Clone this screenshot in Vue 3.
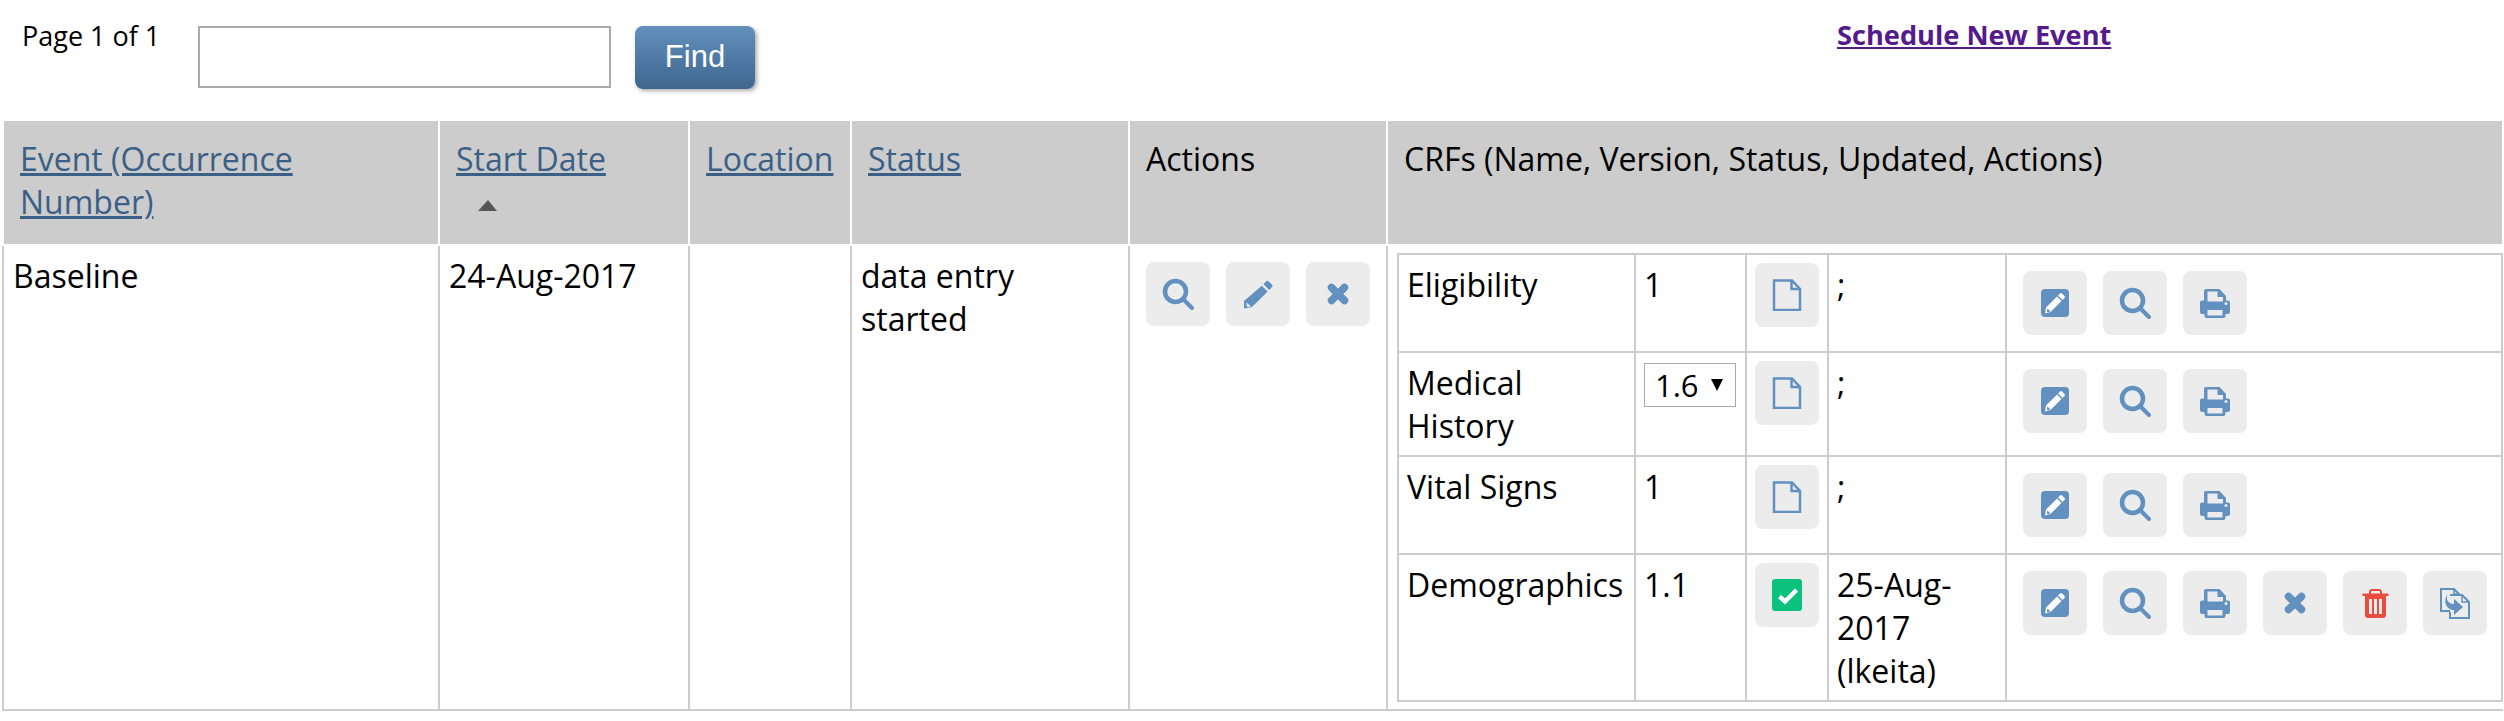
<template>
  <div class="page">
    <div class="toolbar">
      <span class="pager">Page 1 of 1</span>
      <input class="search" type="text" />
      <button class="find">Find</button>
      <a class="schedule" href="#">Schedule New Event</a>
    </div>

    <table class="events">
      <colgroup>
        <col style="width: 436px" />
        <col style="width: 250px" />
        <col style="width: 162px" />
        <col style="width: 278px" />
        <col style="width: 258px" />
        <col />
      </colgroup>
      <thead>
        <tr>
          <th><a href="#">Event (Occurrence Number)</a></th>
          <th>
            <a href="#">Start Date</a>
            <div class="sort"></div>
          </th>
          <th><a href="#">Location</a></th>
          <th><a href="#">Status</a></th>
          <th>Actions</th>
          <th>CRFs (Name, Version, Status, Updated, Actions)</th>
        </tr>
      </thead>
      <tbody>
        <tr>
          <td class="main-cell">Baseline</td>
          <td class="main-cell">24-Aug-2017</td>
          <td class="main-cell"></td>
          <td class="main-cell">data entry started</td>
          <td class="main-cell action-cell">
            <div class="btns">
              <span class="btn" v-for="i in eventIcons" :key="i"><svg viewBox="0 0 32 32"><use :href="'#' + i" /></svg></span>
            </div>
          </td>
          <td class="crf-cell">
            <table class="crfs">
              <colgroup>
                <col style="width: 237px" />
                <col style="width: 111px" />
                <col style="width: 82px" />
                <col style="width: 178px" />
                <col />
              </colgroup>
              <tr v-for="crf in crfs" :key="crf.name" :style="{ height: crf.height + 'px' }">
                <td>{{ crf.name }}</td>
                <td>
                  <span v-if="crf.versions" class="version-wrap">
                    <select class="version"><option v-for="v in crf.versions" :key="v">{{ v }}</option></select>
                  </span>
                  <template v-else>{{ crf.version }}</template>
                </td>
                <td class="status-cell">
                  <span class="btn">
                    <svg viewBox="0 0 32 32"><use :href="crf.done ? '#i-done' : '#i-doc'" /></svg>
                  </span>
                </td>
                <td>{{ crf.updated }}</td>
                <td class="crf-actions">
                  <div class="btns">
                    <span class="btn" v-for="i in crf.actions" :key="i"><svg viewBox="0 0 32 32"><use :href="'#' + i" /></svg></span>
                  </div>
                </td>
              </tr>
            </table>
          </td>
        </tr>
      </tbody>
    </table>

    <svg class="defs" width="0" height="0">
      <defs>
        <g id="i-search">
          <circle cx="13.500" cy="13.500" r="10.500" fill="none" stroke="#6290bf" stroke-width="4.500" />
          <path d="M22 22l8 8" stroke="#6290bf" stroke-width="4" stroke-linecap="round" />
        </g>
        <path id="i-pencil" fill="#6290bf" d="M24 3.500a2 2 0 0 1 2.800 0l3 3a2 2 0 0 1 0 2.800l-2.600 2.600-5.800-5.800zM19.800 7.700l5.800 5.800L10 29l-8 1.500V23zM4.500 24.500v3.300l1.500 1.200 3-.8z" />
        <g id="i-x">
          <path d="M9.500 9.500l13 13M22.500 9.500l-13 13" stroke="#6290bf" stroke-width="7.500" stroke-linecap="round" />
        </g>
        <g id="i-edit">
          <rect x="2" y="2" width="28" height="28" rx="4" fill="#6290bf" />
          <path fill="#fff" d="M21 6.500a1.500 1.500 0 0 1 2 0l2.500 2.500a1.500 1.500 0 0 1 0 2l-2 2-4.500-4.500zM18 9.500l4.500 4.500L11.500 25 6 26.500 7 20.500zM8.500 21.500l-.7 2.800.9.900 2.800-.8z" />
        </g>
        <path id="i-print" fill="#6290bf" fill-rule="evenodd" d="M7 2a2 2 0 0 0-2 2v9.500H3a2 2 0 0 0-2 2V25a2 2 0 0 0 2 2h2.500v2a2 2 0 0 0 2 2h17a2 2 0 0 0 2-2v-2H29a2 2 0 0 0 2-2v-9.500a2 2 0 0 0-2-2h-2V9l-6.500-7zM8.500 4.500h10V10H24v4.500H8.500zM27 15a1.500 1.500 0 1 1 0 3 1.500 1.500 0 0 1 0-3zM8.500 23h15v5.500h-15z" />
        <path id="i-trash" fill="#e94b3c" fill-rule="evenodd" d="M10 6.500V5a3 3 0 0 1 3-3h7a3 3 0 0 1 3 3v1.500h6.500V9H27v19a3 3 0 0 1-3 3H9a3 3 0 0 1-3-3V9H3.500V6.500zM12 6.500h9V5a1 1 0 0 0-1-1h-7a1 1 0 0 0-1 1zM10 12v15h3V12zM15 12v15h3V12zM20 12v15h3V12z" />
        <g id="i-copy" fill="none" stroke="#6290bf">
          <path d="M11 24H2V2h13l5 5v1" stroke-width="2" />
          <path d="M15 2v5h5" stroke-width="1.500" />
          <path d="M11 8h12l7 7v16H11v-6" stroke-width="2" />
          <path d="M23 8v7h7" stroke-width="1.500" />
          <path fill="#6290bf" stroke="none" d="M9 6C6 12 9 17 15 17v-5l9 8-9 8v-5C8 23 3 15 9 6z" />
        </g>
        <g id="i-doc" fill="none" stroke="#6290bf" stroke-width="2.500">
          <path d="M3 1.500h18l8 8.500v21H3z" />
          <path d="M20.500 1.500V10H29" />
        </g>
        <g id="i-done">
          <rect x="1" y="0" width="30" height="32" rx="3" fill="#0ac27b" />
          <path d="M8.500 17.500l5.500 5L25.500 11" fill="none" stroke="#fff" stroke-width="4.500" />
        </g>
      </defs>
    </svg>
  </div>
</template>

<script setup>
const eventIcons = ['i-search', 'i-pencil', 'i-x']
const rowActions = ['i-edit', 'i-search', 'i-print']

const crfs = [
  { name: 'Eligibility', version: '1', updated: ';', actions: rowActions, height: 97 },
  { name: 'Medical History', versions: ['1.6'], updated: ';', actions: rowActions, height: 104 },
  { name: 'Vital Signs', version: '1', updated: ';', actions: rowActions, height: 97 },
  {
    name: 'Demographics',
    version: '1.1',
    done: true,
    updated: '25-Aug-2017 (lkeita)',
    actions: [...rowActions, 'i-x', 'i-trash', 'i-copy'],
    height: 146
  }
]
</script>

<style scoped>
.page {
  width: 2504px;
  font-family: "Open Sans", sans-serif;
  font-size: 32px;
  color: #000;
}
.toolbar {
  display: flex;
  align-items: flex-start;
  height: 121px;
  padding-top: 26px;
  box-sizing: border-box;
}
.pager {
  font-size: 27px;
  margin-left: 22px;
  width: 176px;
  line-height: 20px;
}
.search {
  width: 413px;
  height: 62px;
  box-sizing: border-box;
  border: 2px solid #aaa;
  padding: 0;
}
.find {
  margin-left: 24px;
  width: 120px;
  height: 63px;
  border: none;
  border-radius: 8px;
  color: #fff;
  font-family: "Liberation Sans", Arial, sans-serif;
  font-size: 31px;
  padding: 0 0 1px;
  background: linear-gradient(#6390bd, #3e668f);
  box-shadow: 2px 2px 4px #aaa;
}
.schedule {
  margin-left: 1082px;
  font-size: 27.200px;
  font-weight: 700;
  color: #551a8b;
  line-height: 18px;
}
.events {
  width: 2502px;
  margin-left: 2px;
  border-collapse: collapse;
  table-layout: fixed;
}
.events th {
  background: #ccc;
  font-weight: 400;
  text-align: left;
  vertical-align: top;
  padding: 16px;
  border-left: 2px solid #fff;
  border-right: 2px solid #fff;
  border-bottom: 2px solid #fff;
  line-height: 43px;
  height: 124px;
  box-sizing: border-box;
}
.events th a {
  color: #3a6087;
}
.sort {
  width: 0;
  height: 0;
  margin: 20px 0 0 22px;
  border-left: 10px solid transparent;
  border-right: 9px solid transparent;
  border-bottom: 11px solid #555;
}
.main-cell {
  vertical-align: top;
  padding: 8px 9px;
  line-height: 43px;
  border: 2px solid #ccc;
  border-top: none;
  box-sizing: border-box;
}
.action-cell {
  padding: 16px 0 0 16px;
}
.crf-cell {
  padding: 7px 0 7px 9px;
  vertical-align: top;
  border-left: 2px solid #ccc;
  border-bottom: 2px solid #ccc;
}
.crfs {
  width: 100%;
  border-collapse: collapse;
  table-layout: fixed;
  border: 2px solid #ccc;
}
.crfs td {
  border: 2px solid #ccc;
  vertical-align: top;
  padding: 8px;
  line-height: 43px;
  box-sizing: border-box;
}
.crfs .status-cell {
  padding: 8px;
}
.crfs .crf-actions {
  padding: 16px 0 16px 16px;
}
.btns {
  display: flex;
  gap: 16px;
}
.btn {
  display: flex;
  flex: none;
  align-items: center;
  justify-content: center;
  width: 64px;
  height: 64px;
  background: #ececec;
  border-radius: 8px;
}
.btn svg {
  width: 32px;
  height: 32px;
}
.version-wrap {
  position: relative;
  display: block;
  width: 92px;
  height: 44px;
  margin-top: 2px;
}
.version-wrap::after {
  content: "";
  position: absolute;
  left: 67px;
  top: 16px;
  border-left: 6px solid transparent;
  border-right: 6px solid transparent;
  border-top: 12px solid #000;
  pointer-events: none;
}
.version {
  appearance: none;
  display: block;
  width: 92px;
  height: 44px;
  padding: 0 0 0 10px;
  font-size: 31px;
  font-family: "Open Sans", sans-serif;
  background: #fff;
  border: 1px solid #aaa;
  border-radius: 0;
  color: #000;
}
.defs {
  position: absolute;
}
</style>

<style>
body {
  background: #fff;
}
</style>
